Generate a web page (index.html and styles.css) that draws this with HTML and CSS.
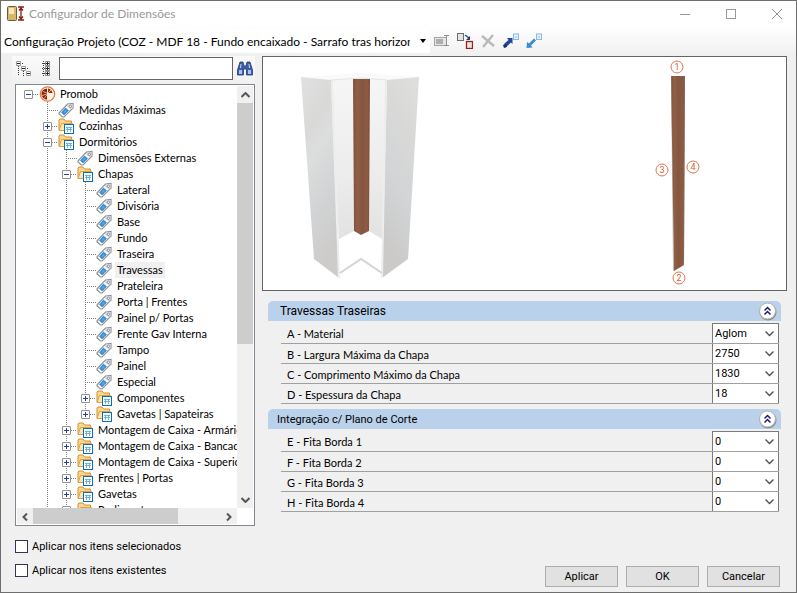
FILE: index.html
```html
<!DOCTYPE html>
<html lang="pt-BR">
<head>
  <meta charset="UTF-8">
  <meta name="viewport" content="width=device-width, initial-scale=1.0">
  <title>Configurador de Dimensões</title>
  <link rel="stylesheet" href="styles.css">
</head>
<body>
  <!-- Icons shared by the tree and the sections -->
  <svg class="sprite" aria-hidden="true">
    <symbol id="icon-tag" viewBox="0 0 17 16">
      <path d="M1 11 L9.500 2 L15 1.500 V6 L6 15 H4.500 L1 12 Z" fill="#fff" stroke="#8d9096" stroke-width="1.200"/>
      <path d="M10 2.500 L14.500 2 V6 L12.500 7.500 L9 4 Z" fill="#d6d8dc"/>
      <circle cx="12.300" cy="4.300" r="1.200" fill="#fff" stroke="#85888e"/>
      <path d="M3.500 10.500 L7.500 6 L10.500 8.500 L6 13 Z" fill="#2f8fdc" stroke="#1d6fb8" stroke-width="0.500"/>
      <path d="M5.500 10.500 L8 8 L8.500 8.500 L6 11 Z" fill="#7cc4f4"/>
    </symbol>
    <symbol id="icon-folder" viewBox="0 0 17 16">
      <path d="M1 12 V2 L2 1 H6 L7.500 3 H13.500 V12 Z" fill="#fbd98a" stroke="#d18f36"/>
      <path d="M1 12.500 L3.500 5.500 H14.500 V12.500 Z" fill="#fde7ac" stroke="#dba04b"/>
      <rect x="6.500" y="6.500" width="9" height="9" fill="#fff" stroke="#0d6cb4"/>
      <path d="M8 9.500 H14 M8 11.500 H14 M9.500 9 V14 M12.500 9 V14" stroke="#68b2e6"/>
    </symbol>
    <symbol id="icon-promob" viewBox="0 0 17 16">
      <circle cx="8.500" cy="8" r="7.200" fill="#fff3e3" stroke="#e07a3c" stroke-width="1.300"/>
      <path d="M8 2.500 A5.500 5.500 0 0 0 8 13.500 Z" fill="#8c1c0c"/>
      <path d="M9 2.500 A5.500 5.500 0 0 1 13.500 7 H9 Z" fill="#a32a10"/>
      <path d="M4 5.500 L8 7 M3 9.500 L8 8 M5 12.500 L8 9 M9 7 L12 4" stroke="#f5bd8c" stroke-width="0.900"/>
    </symbol>
    <symbol id="icon-collapse" viewBox="0 0 20 20">
      <circle cx="10" cy="11" r="8.500" fill="#8a8a8a"/>
      <circle cx="9.500" cy="10" r="8" fill="#fff" stroke="#b2b2b2"/>
      <path d="M6.500 9.500 L9.500 6.500 L12.500 9.500 M6.500 13.500 L9.500 10.500 L12.500 13.500" fill="none" stroke="#1c1c7c" stroke-width="1.500"/>
    </symbol>
  </svg>

  <div class="window">
    <header class="title-bar">
      <svg class="app-icon" width="18" height="16" viewBox="0 0 18 16">
        <rect x="0.500" y="0.500" width="9" height="14" rx="1" fill="#d9b66c" stroke="#6f5a33"/>
        <rect x="2" y="2" width="5" height="6" fill="#f5e7bd"/>
        <path d="M11 1 H17 M11 14 H17 M14 2 V13 M12 4.500 L14 2 L16 4.500 M12 10.500 L14 13 L16 10.500" fill="none" stroke="#8b1a12" stroke-width="1.300"/>
      </svg>
      <h1>Configurador de Dimensões</h1>
      <div class="window-buttons">
        <button aria-label="Minimizar"><svg width="10" height="10" viewBox="0 0 10 10"><path d="M0 5.500 H10" stroke="#999"/></svg></button>
        <button aria-label="Maximizar"><svg width="10" height="10" viewBox="0 0 10 10"><rect x="0.500" y="0.500" width="9" height="9" fill="none" stroke="#999"/></svg></button>
        <button aria-label="Fechar"><svg width="10" height="10" viewBox="0 0 10 10"><path d="M0 0 L10 10 M10 0 L0 10" stroke="#8c8c8c"/></svg></button>
      </div>
    </header>

    <div class="toolbar">
      <select class="project-select" aria-label="Configuração">
        <option>Configuração Projeto (COZ - MDF 18 - Fundo encaixado - Sarrafo tras horizontal)</option>
      </select>
      <button aria-label="Renomear">
        <svg width="16" height="16" viewBox="0 0 16 16">
          <rect x="0.500" y="4.500" width="12" height="8" fill="#e6e6e6" stroke="#a5a5a5"/>
          <rect x="2" y="6" width="7" height="5" fill="#a9b0ae"/>
          <path d="M10 2.500 H15 M10 12.500 H15 M12.500 3 V12" stroke="#8e8e8e"/>
        </svg>
      </button>
      <button aria-label="Copiar">
        <svg width="16" height="16" viewBox="0 0 16 16">
          <rect x="0.500" y="0.500" width="6" height="7" fill="#e4e4e4" stroke="#6b6b6b"/>
          <rect x="9.500" y="8.500" width="6" height="7" fill="#ece4e2" stroke="#9c1f14" stroke-width="1.300"/>
          <path d="M8 2 L12 5" stroke="#17457f" stroke-width="1.300"/>
          <path d="M13 3 V7 H9 Z" fill="#17457f"/>
        </svg>
      </button>
      <button aria-label="Excluir">
        <svg width="16" height="16" viewBox="0 0 16 16"><path d="M2 3 L14 13 M13 2 L3 14" stroke="#b9b9b9" stroke-width="2.400"/></svg>
      </button>
      <button aria-label="Exportar">
        <svg width="16" height="16" viewBox="0 0 16 16">
          <rect x="10.500" y="1" width="5" height="5.500" fill="#e7f3fc" stroke="#8ab9df"/>
          <path d="M12 4 H14" stroke="#8ab9df"/>
          <path d="M1 11 L3 14 L8 9.500 L9.500 11 V5 H4 L5.500 7 Z" fill="#23479c"/>
          <path d="M0 12 L3 11 L4 14 L1 15 Z" fill="#183064"/>
        </svg>
      </button>
      <button aria-label="Importar">
        <svg width="16" height="16" viewBox="0 0 16 16">
          <rect x="10.500" y="1" width="5" height="5.500" fill="#e7f3fc" stroke="#8ab9df"/>
          <path d="M12 4 H14" stroke="#8ab9df"/>
          <path d="M0.500 15 L1 9 L3 10.500 L8 5.500 L10 7.500 L5 12.500 L6.500 14.500 Z" fill="#3c8bd4"/>
        </svg>
      </button>
    </div>

    <main class="content">
      <aside class="sidebar">
        <div class="search-bar">
          <button class="expand-button" aria-label="Recolher tudo">
            <svg width="16" height="16" viewBox="0 0 16 16" fill="none">
              <path d="M2.500 5 V15 M7.500 10 V15 M4 2.500 H8 M7 7.500 H12 M12 12.500 H16" stroke="#333" stroke-dasharray="1 1"/>
              <path d="M0.500 0.500 H4.500 V4.500 H0.500 Z M5.500 5.500 H9.500 V9.500 H5.500 Z M10.500 10.500 H14.500 V14.500 H10.500 Z" fill="#fff" stroke="#9a9a9a"/>
              <path d="M1 2.500 H4 M6 7.500 H9 M11 12.500 H14" stroke="#222"/>
            </svg>
          </button>
          <button class="expand-button" aria-label="Expandir tudo">
            <svg width="10" height="16" viewBox="0 0 10 16" fill="none">
              <path d="M1.500 0 V16 M0 2.500 H3 M0 7.500 H3 M0 12.500 H3" stroke="#444" stroke-dasharray="1 1"/>
              <path d="M3.500 0.500 H7.500 V4.500 H3.500 Z M3.500 5.500 H7.500 V9.500 H3.500 Z M3.500 10.500 H7.500 V14.500 H3.500 Z" fill="#fff" stroke="#8a8a8a"/>
              <path d="M4 2.500 H7 M5.500 1 V4 M4 7.500 H7 M5.500 6 V9 M4 12.500 H7 M5.500 11 V14" stroke="#222"/>
            </svg>
          </button>
          <input type="text" class="search-input" aria-label="Procurar">
          <button class="find-button" aria-label="Procurar">
            <svg width="16" height="15" viewBox="0 0 16 15">
              <path d="M3 1 H6 L7 5 H9 L10 1 H13 L15.500 9 V14 H9.500 V8 H6.500 V14 H0.500 V9 Z" fill="#3c5ea8" stroke="#203a78" stroke-width="0.800"/>
              <path d="M2 9 H5 V13 H2 Z M11 9 H14 V13 H11 Z" fill="#a8c4ec"/>
              <path d="M4 3 L3.500 7 M12 3 L12.500 7" stroke="#c6d8f4"/>
            </svg>
          </button>
        </div>

        <div class="tree-box">
          <div class="tree-view">
            <ul class="tree" id="tree"></ul>
          </div>
          <div class="scroll scroll-v">
            <button aria-label="Acima"><svg width="9" height="6" viewBox="0 0 9 6"><path d="M0.500 5 L4.500 1 L8.500 5" fill="none" stroke="#555" stroke-width="2"/></svg></button>
            <div class="track"><div class="thumb"></div></div>
            <button aria-label="Abaixo"><svg width="9" height="6" viewBox="0 0 9 6"><path d="M0.500 1 L4.500 5 L8.500 1" fill="none" stroke="#555" stroke-width="2"/></svg></button>
          </div>
          <div class="scroll scroll-h">
            <button aria-label="Esquerda"><svg width="6" height="8" viewBox="0 0 6 8"><path d="M5 0.500 L1.500 4 L5 7.500" fill="none" stroke="#555" stroke-width="2"/></svg></button>
            <div class="track"><div class="thumb"></div></div>
            <button aria-label="Direita"><svg width="6" height="8" viewBox="0 0 6 8"><path d="M1 0.500 L4.500 4 L1 7.500" fill="none" stroke="#555" stroke-width="2"/></svg></button>
          </div>
        </div>
      </aside>

      <section class="details">
        <div class="preview">
          <svg viewBox="0 0 523 233" role="img" aria-label="Travessas">
            <defs>
              <linearGradient id="panel-left" x1="0" y1="0" x2="0.300" y2="1">
                <stop offset="0" stop-color="#e0e0e0"/><stop offset="0.300" stop-color="#d9d9d8"/>
                <stop offset="0.450" stop-color="#dcdddd"/><stop offset="0.700" stop-color="#d2d4d5"/><stop offset="1" stop-color="#cdcccb"/>
              </linearGradient>
              <linearGradient id="panel-right" x1="1" y1="0" x2="0.700" y2="1">
                <stop offset="0" stop-color="#dfdfdf"/><stop offset="0.300" stop-color="#d9d9d7"/>
                <stop offset="0.650" stop-color="#d2d4d6"/><stop offset="1" stop-color="#cbcac9"/>
              </linearGradient>
              <linearGradient id="panel-back" x1="0" y1="0" x2="0" y2="1">
                <stop offset="0" stop-color="#f6f6f6"/><stop offset="0.600" stop-color="#ececec"/><stop offset="1" stop-color="#e2e2e2"/>
              </linearGradient>
              <linearGradient id="wood" x1="0" y1="0" x2="1" y2="0">
                <stop offset="0" stop-color="#80503a"/><stop offset="0.250" stop-color="#8f5f45"/>
                <stop offset="0.550" stop-color="#85563f"/><stop offset="0.800" stop-color="#8e5b43"/><stop offset="1" stop-color="#7f4e38"/>
              </linearGradient>
            </defs>
            <!-- Corner cabinet -->
            <path d="M38 20 L100 16 L156 20 L122 24 L98 22 L68 24 Z" fill="#fafafa"/>
            <path d="M68 23 L90 22 L91 174 L76 182 Z" fill="url(#panel-back)"/>
            <path d="M107 22 L124 23 L119 182 L106 174 Z" fill="url(#panel-back)"/>
            <path d="M38 20 L68 23 L76 221 L51 202 Z" fill="url(#panel-left)"/>
            <path d="M156 20 L124 23 L119 221 L145 202 Z" fill="url(#panel-right)"/>
            <path d="M69 23 L76 221 M123 23 L119 221" stroke="#ededed" stroke-width="2"/>
            <path d="M68 23 L98 21 L124 23" fill="none" stroke="#e3e3e3"/>
            <path d="M77 216 L98 202 L119 216" fill="none" stroke="#d4d4d4" stroke-width="2"/>
            <path d="M90 22 H107 L106 174 L98 178 L91 174 Z" fill="url(#wood)"/>
            <!-- Rail with the numbered edges -->
            <path d="M408 19 H422 L421 208 L411 214 Z" fill="url(#wood)"/>
            <path d="M408.500 19 L410.500 214 M421.500 19 L420.500 208" stroke="#8d8173" stroke-width="0.500"/>
            <g class="marks">
              <circle cx="414" cy="10" r="6"/><text x="414" y="13">1</text>
              <circle cx="416" cy="221" r="6"/><text x="416" y="224">2</text>
              <circle cx="399" cy="113" r="6"/><text x="399" y="116">3</text>
              <circle cx="430" cy="110" r="6"/><text x="430" y="113">4</text>
            </g>
          </svg>
        </div>

        <div class="group">
          <div class="group-header group-header-main">
            <h2>Travessas Traseiras</h2>
            <button aria-label="Recolher"><svg width="20" height="20"><use href="#icon-collapse"/></svg></button>
          </div>
          <div class="fields">
            <div class="field"><label for="material">A - Material</label><select id="material"><option>Aglom</option></select></div>
            <div class="field"><label for="largura">B - Largura Máxima da Chapa</label><select id="largura"><option>2750</option></select></div>
            <div class="field"><label for="comprimento">C - Comprimento Máximo da Chapa</label><select id="comprimento"><option>1830</option></select></div>
            <div class="field"><label for="espessura">D - Espessura da Chapa</label><select id="espessura"><option>18</option></select></div>
          </div>
        </div>

        <div class="group">
          <div class="group-header">
            <h2>Integração c/ Plano de Corte</h2>
            <button aria-label="Recolher"><svg width="20" height="20"><use href="#icon-collapse"/></svg></button>
          </div>
          <div class="fields">
            <div class="field"><label for="fita1">E - Fita Borda 1</label><select id="fita1"><option>0</option></select></div>
            <div class="field"><label for="fita2">F - Fita Borda 2</label><select id="fita2"><option>0</option></select></div>
            <div class="field"><label for="fita3">G - Fita Borda 3</label><select id="fita3"><option>0</option></select></div>
            <div class="field"><label for="fita4">H - Fita Borda 4</label><select id="fita4"><option>0</option></select></div>
          </div>
        </div>
      </section>
    </main>

    <footer class="footer">
      <div class="options">
        <label><input type="checkbox"> Aplicar nos itens selecionados</label>
        <label><input type="checkbox"> Aplicar nos itens existentes</label>
      </div>
      <div class="actions">
        <button>Aplicar</button>
        <button>OK</button>
        <button>Cancelar</button>
      </div>
    </footer>
  </div>

  <script>
    // A node with "open" is a folder; the others are plain items
    const treeData = [
      { name: 'Promob', icon: 'promob', open: true, children: [
        { name: 'Medidas Máximas' },
        { name: 'Cozinhas', open: false },
        { name: 'Dormitórios', open: true, children: [
          { name: 'Dimensões Externas' },
          { name: 'Chapas', open: true, children: [
            { name: 'Lateral' },
            { name: 'Divisória' },
            { name: 'Base' },
            { name: 'Fundo' },
            { name: 'Traseira' },
            { name: 'Travessas', selected: true },
            { name: 'Prateleira' },
            { name: 'Porta | Frentes' },
            { name: 'Painel p/ Portas' },
            { name: 'Frente Gav Interna' },
            { name: 'Tampo' },
            { name: 'Painel' },
            { name: 'Especial' },
            { name: 'Componentes', open: false },
            { name: 'Gavetas | Sapateiras', open: false }
          ] },
          { name: 'Montagem de Caixa - Armário', open: false },
          { name: 'Montagem de Caixa - Bancada', open: false },
          { name: 'Montagem de Caixa - Superior', open: false },
          { name: 'Frentes | Portas', open: false },
          { name: 'Gavetas', open: false },
          { name: 'Rodimentos', open: false }
        ] }
      ] }
    ];

    function renderNodes(nodes, list) {
      nodes.forEach((node) => {
        const isFolder = 'open' in node;
        const icon = node.icon || (isFolder ? 'folder' : 'tag');
        const item = document.createElement('li');
        const row = document.createElement('div');
        row.className = 'row' + (node.selected ? ' selected' : '');
        row.innerHTML = (isFolder ? `<button class="toggle${node.open ? '' : ' closed'}" aria-label="${node.name}"></button>` : '') +
          `<span class="line"></span><svg width="17" height="16"><use href="#icon-${icon}"/></svg>` +
          `<span class="label">${node.name}</span>`;
        item.appendChild(row);

        if (node.children) {
          const sub = document.createElement('ul');
          renderNodes(node.children, sub);
          item.appendChild(sub);
          row.querySelector('.toggle').addEventListener('click', (event) => {
            sub.hidden = !sub.hidden;
            event.target.classList.toggle('closed', sub.hidden);
          });
        }
        list.appendChild(item);
      });
    }

    renderNodes(treeData, document.getElementById('tree'));
  </script>
</body>
</html>
```
FILE: styles.css
```css
* {
  box-sizing: border-box;
}
body {
  margin: 0;
  font-family: Roboto, "Liberation Sans", Arial, sans-serif;
  font-size: 11px;
  color: #000;
  background-color: #f0f0f0;
}
button, input, select {
  font: inherit;
  color: inherit;
}
button {
  padding: 0;
  border: none;
  background: none;
}
svg {
  display: block;
}
.sprite {
  display: none;
}
.window {
  min-height: 100vh;
  display: flex;
  flex-direction: column;
  border: 1px solid #6e6e6e;
}

/* Title bar and toolbar */
.title-bar {
  display: flex;
  align-items: center;
  height: 25px;
  padding-left: 6px;
  background-color: #fff;
}
.title-bar h1 {
  margin: 0 0 0 4px;
  flex: 1;
  font-family: Lato, sans-serif;
  font-size: 12px;
  font-weight: normal;
  color: #999;
}
.window-buttons {
  display: flex;
}
.window-buttons button {
  width: 46px;
  height: 24px;
  display: flex;
  align-items: center;
  justify-content: center;
}
.window-buttons button:last-child {
  margin-right: -4px;
}
.toolbar {
  display: flex;
  align-items: center;
  height: 30px;
  background: linear-gradient(#fff, #f0f0f0);
}
.toolbar button {
  width: 23px;
  height: 22px;
  display: flex;
  align-items: center;
  justify-content: center;
}
.project-select {
  appearance: none;
  width: 429px;
  height: 24px;
  padding: 0 20px 0 3px;
  border: none;
  font-family: Lato, sans-serif;
  font-size: 12px;
  background: #fff url("data:image/svg+xml,%3Csvg xmlns='http://www.w3.org/2000/svg' width='6' height='4'%3E%3Cpath d='M0 0H6L3 4Z'/%3E%3C/svg%3E") no-repeat right 4px center;
}

/* Left side */
.content {
  flex: 1;
  display: flex;
}
.sidebar {
  width: 243px;
  margin: 0 7px 0 11px;
  display: flex;
  flex-direction: column;
}
.search-bar {
  display: flex;
  align-items: center;
  height: 28px;
  padding: 1px 0 4px;
  background: linear-gradient(#fafafa, #f0f0f0);
}
.expand-button {
  width: 23px;
  display: flex;
  justify-content: center;
}
.search-input {
  flex: 1;
  min-width: 0;
  height: 23px;
  margin-left: 1px;
  border: 1px solid #646464;
  background-color: #fff;
}
.find-button {
  width: 22px;
  padding-left: 4px;
}
.tree-box {
  flex: 1;
  display: grid;
  grid-template-columns: 1fr 16px;
  grid-template-rows: 1fr 16px;
  margin-left: 3px;
  padding: 1px;
  border: 1px solid #828790;
  background-color: #fff;
}
.tree-view {
  min-width: 0;
  height: 0;
  min-height: 100%;
  overflow: hidden;
  font-family: Lato, sans-serif;
}
.tree-view ul {
  margin: 0;
  padding: 0;
  list-style: none;
}
.tree-view .tree {
  padding-left: 7px;
}
.tree-view ul ul {
  padding-left: 19px;
}
.tree ul > li {
  background: repeating-linear-gradient(#808080 0 1px, transparent 1px 2px) 4px 0 / 1px 100% no-repeat;
}
.tree ul ul ul > li:last-child {
  background-size: 1px 8px;
}
.row {
  display: flex;
  align-items: center;
  height: 16px;
  white-space: nowrap;
}
.row svg {
  flex: none;
}
.toggle {
  width: 9px;
  height: 9px;
  flex: none;
  border: 1px solid #919191;
  border-radius: 1px;
  background: linear-gradient(#24408e, #24408e) center / 5px 1px no-repeat, #fff;
}
.toggle.closed {
  background: linear-gradient(#24408e, #24408e) center / 5px 1px no-repeat, linear-gradient(#24408e, #24408e) center / 1px 5px no-repeat, #fff;
}
.line {
  flex: none;
  width: 11px;
  height: 1px;
  margin-left: 4px;
  background: repeating-linear-gradient(90deg, #808080 0 1px, transparent 1px 2px);
}
.toggle + .line {
  width: 6px;
  margin-left: 0;
}
.label {
  margin-left: 2px;
  padding: 0 2px;
  line-height: 16px;
}
.selected .label {
  background-color: #f0f0f0;
}
.scroll {
  display: flex;
  background-color: #f0f0f0;
}
.scroll button {
  width: 16px;
  height: 17px;
  display: flex;
  align-items: center;
  justify-content: center;
}
.scroll .track {
  flex: 1;
}
.thumb {
  background-color: #cdcdcd;
}
.scroll-v {
  flex-direction: column;
}
.scroll-v .thumb {
  height: 62%;
}
.scroll-h .thumb {
  width: 77%;
  height: 100%;
}

/* Right side */
.details {
  flex: 1;
  min-width: 0;
  margin-right: 9px;
}
.preview {
  border: 1px solid #646464;
  background-color: #fff;
}
.preview svg {
  width: 100%;
  height: auto;
}
.marks circle {
  fill: #fff;
  stroke: #e0764f;
}
.marks text {
  fill: #d9602f;
  font-size: 9px;
  text-anchor: middle;
}
.group {
  margin: 5px 6px 0;
}
.preview + .group {
  margin-top: 10px;
}
.group-header {
  display: flex;
  align-items: center;
  justify-content: space-between;
  height: 20px;
  padding: 0 3px 0 9px;
  border-radius: 5px 5px 0 0;
  background-color: #b9d1ea;
}
.group-header-main {
  padding-left: 12px;
}
.group-header h2 {
  margin: 0;
  font-size: 11px;
  font-weight: normal;
}
.group-header-main h2 {
  font-size: 12px;
}
.fields {
  margin: 2px 2px 0 13px;
}
.field {
  display: flex;
  align-items: center;
  height: 20px;
  border-bottom: 1px solid #a0a0a0;
}
.field:first-child {
  height: 21px;
}
.field label {
  flex: 1;
  padding: 1px 0 0 6px;
  font-family: Lato, sans-serif;
}
.field select {
  appearance: none;
  align-self: stretch;
  width: 67px;
  padding: 0 18px 0 2px;
  border: 1px solid #7a7a7a;
  border-width: 0 1px;
  border-radius: 0;
  background: #fff url("data:image/svg+xml,%3Csvg xmlns='http://www.w3.org/2000/svg' width='9' height='6'%3E%3Cpath d='M.5 .5L4.500 4.500L8.500 .5' fill='none' stroke='%23505050' stroke-width='1.300'/%3E%3C/svg%3E") no-repeat right 4px center;
}
.field:first-child select {
  border-top-width: 1px;
}

/* Footer */
.footer {
  display: flex;
  align-items: flex-end;
  justify-content: space-between;
  padding: 8px 16px 5px 14px;
}
.options {
  display: flex;
  flex-direction: column;
  padding-bottom: 5px;
}
.options label {
  display: flex;
  align-items: center;
  gap: 4px;
  height: 24px;
}
.options input {
  appearance: none;
  width: 13px;
  height: 13px;
  margin: 0;
  border: 1px solid #333355;
  background-color: #fff;
}
.options input:checked {
  background-color: #333355;
}
.actions {
  display: flex;
  gap: 8px;
}
.actions button {
  width: 73px;
  height: 21px;
  border: 1px solid #adadad;
  background-color: #e1e1e1;
}
```
